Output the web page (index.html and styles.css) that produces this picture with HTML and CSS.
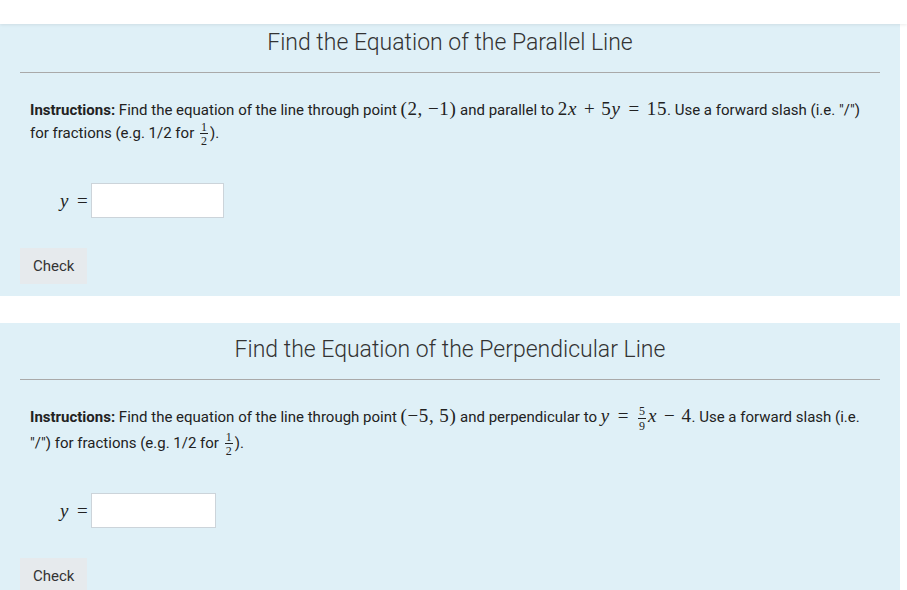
FILE: index.html
```html
<!DOCTYPE html>
<html lang="en">
<head>
<meta charset="utf-8">
<title>Equations of Lines</title>
<link rel="stylesheet" href="styles.css">
</head>
<body>
<div class="topbar"></div>
<main class="page">
  <section class="panel">
    <h2 class="panel-title">Find the Equation of the Parallel Line</h2>
    <hr class="rule">
    <p class="instructions"><b>Instructions:</b> Find the equation of the line through point <span class="m">(2,<span class="sp"></span>−1)</span> and parallel to <span class="m">2<i>x</i><span class="bin">+</span>5<i>y</i><span class="rel">=</span>15</span>. Use a forward slash (i.e. "/") for fractions (e.g. 1/2 for <span class="m"><span class="frac"><span class="num">1</span><span class="den">2</span></span></span>).</p>
    <div class="answer">
      <label class="m ans-label"><i>y</i><span class="rel">=</span></label>
      <input class="ans-input ans-wide" type="text">
    </div>
    <button class="check">Check</button>
  </section>

  <section class="panel">
    <h2 class="panel-title">Find the Equation of the Perpendicular Line</h2>
    <hr class="rule">
    <p class="instructions"><b>Instructions:</b> Find the equation of the line through point <span class="m">(−5,<span class="sp"></span>5)</span> and perpendicular to <span class="m"><i>y</i><span class="rel">=</span><span class="frac frac-tall"><span class="num">5</span><span class="den">9</span></span><i>x</i><span class="bin">−</span>4</span>. Use a forward slash (i.e. "/") for fractions (e.g. 1/2 for <span class="m"><span class="frac"><span class="num">1</span><span class="den">2</span></span></span>).</p>
    <div class="answer">
      <label class="m ans-label"><i>y</i><span class="rel">=</span></label>
      <input class="ans-input ans-narrow" type="text">
    </div>
    <button class="check">Check</button>
  </section>
</main>
</body>
</html>
```

FILE: styles.css
```css
html, body {
  margin: 0;
  padding: 0;
  background: #ffffff;
}

body {
  font-family: "Roboto", "Liberation Sans", sans-serif;
  color: #222;
  overflow: hidden;
}

.topbar {
  position: fixed;
  top: 0;
  left: 0;
  right: 0;
  height: 24px;
  background: #ffffff;
  box-shadow: 0 1px 3px rgba(0, 0, 0, 0.08);
  z-index: 10;
}

.page {
  padding-top: 16px;
  display: flex;
  flex-direction: column;
  gap: 27px;
}

.panel {
  width: 900px;
  box-sizing: border-box;
  background: #dff0f7;
  padding: 14px 20px 12px;
  display: flex;
  flex-direction: column;
  align-items: flex-start;
}

.panel-title {
  align-self: stretch;
  margin: 0;
  text-align: center;
  font-weight: 300;
  font-size: 23px;
  line-height: 26px;
  color: #333;
}

.rule {
  align-self: stretch;
  margin: 16px 0 0;
  border: 0;
  border-top: 1px solid #a9a9a9;
  height: 0;
}

.instructions {
  margin: 26px 0 0;
  padding: 0 10px;
  font-size: 15px;
  line-height: 23px;
  color: #222;
}

.instructions b {
  font-weight: 700;
}

.m {
  font-family: "Liberation Serif", "DejaVu Serif", serif;
  font-size: 19px;
  line-height: 1;
  white-space: nowrap;
  letter-spacing: 0.6px;
}

.m i {
  font-style: italic;
  margin-right: 1px;
}

.sp {
  display: inline-block;
  width: 5px;
}

.bin {
  margin: 0 6px;
}

.rel {
  margin: 0 7px;
}

.frac {
  display: inline-flex;
  flex-direction: column;
  align-items: center;
  vertical-align: 7px;
  font-size: 12px;
  line-height: 10px;
  letter-spacing: 0;
  margin: 0 2px;
}

.frac-tall {
  line-height: 11px;
}

.frac .num {
  padding: 0 1px 1px;
}

.frac .den {
  align-self: stretch;
  text-align: center;
  border-top: 1px solid #222;
  padding: 2px 1px 0;
}

.answer {
  margin-top: 37px;
  margin-left: 40px;
  display: flex;
  align-items: center;
}

.ans-label {
  margin-right: 3px;
}

.ans-label .rel {
  margin-right: 0;
}

.ans-input {
  height: 35px;
  box-sizing: border-box;
  border: 1px solid #ccd4da;
  background: #ffffff;
  padding: 4px 8px;
  font-size: 14px;
  outline: none;
}

.ans-wide {
  width: 133px;
}

.ans-narrow {
  width: 125px;
}

.check {
  margin-top: 30px;
  height: 36px;
  padding: 0 13px;
  border: 0;
  background: #e6eaed;
  color: #333;
  font-family: "Roboto", "Liberation Sans", sans-serif;
  font-size: 15px;
  cursor: pointer;
}
```
